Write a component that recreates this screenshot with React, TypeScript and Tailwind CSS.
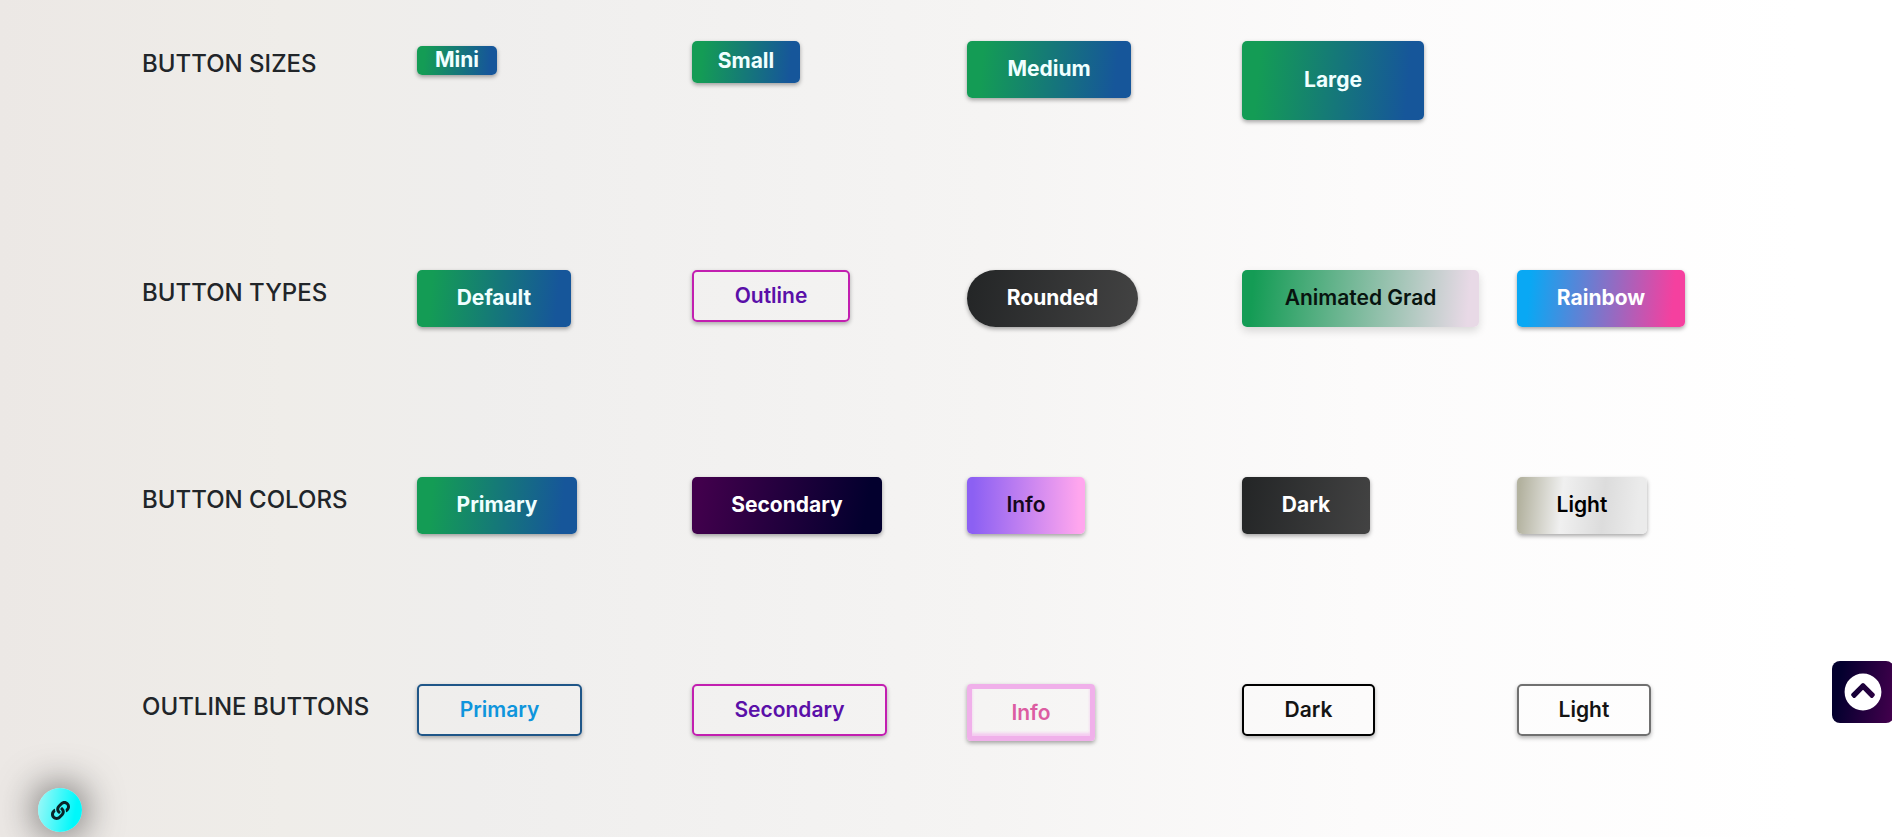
import type { ReactNode } from "react";
import { FaChevronCircleUp, FaLink } from "react-icons/fa";

type Item = { label: string; look: string };
type Row = { title: string; items: Item[] };

const FILLED = "h-[57px] rounded-[5px] pb-px shadow-[0_2px_4px_rgba(0,0,0,0.35)]";
const OUTLINED = "h-[52px] rounded-[5px] border-2 font-semibold shadow-[0_2px_4px_rgba(0,0,0,0.3)]";
const OCEAN = "bg-linear-95/srgb from-[#149c55] from-10% to-[#16569a] to-90% font-bold text-[#f0ffff]";
const CHARCOAL = "bg-linear-100/srgb from-[#232526] to-[#434343] font-bold text-white";

const rows: Row[] = [
  {
    title: "BUTTON SIZES",
    items: [
      { label: "Mini", look: `mt-[5px] h-[29px] w-[80px] rounded-[5px] pb-px shadow-[0_2px_4px_rgba(0,0,0,0.35)] ${OCEAN}` },
      { label: "Small", look: `h-[42px] w-[108px] rounded-[5px] pb-0.5 shadow-[0_2px_4px_rgba(0,0,0,0.35)] ${OCEAN}` },
      { label: "Medium", look: `w-[164px] ${FILLED} ${OCEAN}` },
      { label: "Large", look: `h-[79px] w-[182px] rounded-[5px] pb-px shadow-[0_2px_4px_rgba(0,0,0,0.35)] ${OCEAN}` },
    ],
  },
  {
    title: "BUTTON TYPES",
    items: [
      { label: "Default", look: `w-[154px] ${FILLED} ${OCEAN}` },
      { label: "Outline", look: `w-[158px] border-[#c21fb0] text-[#5a0fa8] ${OUTLINED}` },
      { label: "Rounded", look: `h-[57px] w-[171px] rounded-full pb-px shadow-[0_2px_4px_rgba(0,0,0,0.35)] ${CHARCOAL}` },
      {
        label: "Animated Grad",
        look: "h-[57px] w-[237px] rounded-[5px] bg-linear-95/srgb from-[#149c55] from-5% to-[#e8d9e6] to-95% pb-px font-semibold text-[#08140f] shadow-[0_4px_8px_rgba(0,0,0,0.14)]",
      },
      { label: "Rainbow", look: `w-[168px] bg-linear-95/srgb from-[#09a8f4] from-8% to-[#f5409f] to-92% font-bold text-white ${FILLED}` },
    ],
  },
  {
    title: "BUTTON COLORS",
    items: [
      { label: "Primary", look: `w-[160px] ${FILLED} ${OCEAN}` },
      { label: "Secondary", look: `w-[190px] bg-linear-100/srgb from-[#41004c] from-5% to-[#03002e] to-90% font-bold text-white ${FILLED}` },
      { label: "Info", look: `w-[118px] bg-linear-to-r/srgb from-[#8c60f3] from-5% to-[#ffa6ee] to-95% font-semibold text-[#14081c] ${FILLED}` },
      { label: "Dark", look: `w-[128px] ${FILLED} ${CHARCOAL}` },
      {
        label: "Light",
        look: `w-[130px] bg-[linear-gradient(95deg,#b3b29f_3%,#f0f0f0_35%,#dcdcdc_66%,#ebebeb_92%)] font-semibold text-black ${FILLED}`,
      },
    ],
  },
  {
    title: "OUTLINE BUTTONS",
    items: [
      { label: "Primary", look: `w-[165px] border-[#1f5688] text-[#0f95dc] ${OUTLINED}` },
      { label: "Secondary", look: `w-[195px] border-[#c21fb0] text-[#5a0fa8] ${OUTLINED}` },
      {
        label: "Info",
        look: "h-[57px] w-[128px] rounded-[4px] border-[5px] border-[#f0b0ea] font-semibold text-[#dc5ca2] shadow-[0_2px_4px_rgba(0,0,0,0.35),inset_0_-3px_3px_rgba(243,175,236,0.6)]",
      },
      { label: "Dark", look: `w-[133px] border-black text-[#141414] ${OUTLINED}` },
      { label: "Light", look: `w-[134px] border-[#707070] text-[#141414] ${OUTLINED}` },
    ],
  },
];

function DemoButton({ look, children }: { look: string; children: ReactNode }) {
  return (
    <button type="button" className={`flex cursor-pointer items-center justify-center text-[21px] leading-6 whitespace-nowrap ${look}`}>
      {children}
    </button>
  );
}

export default function App() {
  return (
    <main className="min-h-screen bg-[linear-gradient(to_right,#ece8e5_0%,#efede9_15%,#efeeed_25%,#f5f4f3_52%,#fcfbfb_72%,#ffffff_95%)] px-4 pt-[41px] font-['Inter','Liberation_Sans',sans-serif]">
      <div className="mx-auto flex max-w-[1650px] flex-col">
        {rows.map((row) => (
          <section key={row.title} className="grid grid-cols-6 items-start pb-[150px] last:pb-10">
            <h2 className="pt-2 pl-[21px] text-2xl leading-[30px] font-medium whitespace-nowrap text-[#212529]">{row.title}</h2>
            {row.items.map((item) => (
              <div key={item.label} className="pl-[21px]">
                <DemoButton look={item.look}>{item.label}</DemoButton>
              </div>
            ))}
          </section>
        ))}
      </div>

      <a
        href="#links"
        aria-label="Links"
        className="fixed bottom-[5px] left-[38px] flex size-11 items-center justify-center rounded-full bg-linear-100/srgb from-[#8df8f8] from-10% to-[#00f8fb] to-80% text-[#082428] shadow-[0_0_40px_rgba(0,0,0,0.75)]"
      >
        <FaLink className="size-[19px]" />
      </a>

      <button
        type="button"
        aria-label="Back to top"
        className="fixed top-[661px] -right-0.5 flex size-[62px] cursor-pointer items-center justify-center rounded-lg bg-linear-100/srgb from-[#03002e] from-15% to-[#41004c] to-95% text-white"
      >
        <FaChevronCircleUp className="size-[38px]" />
      </button>
    </main>
  );
}
